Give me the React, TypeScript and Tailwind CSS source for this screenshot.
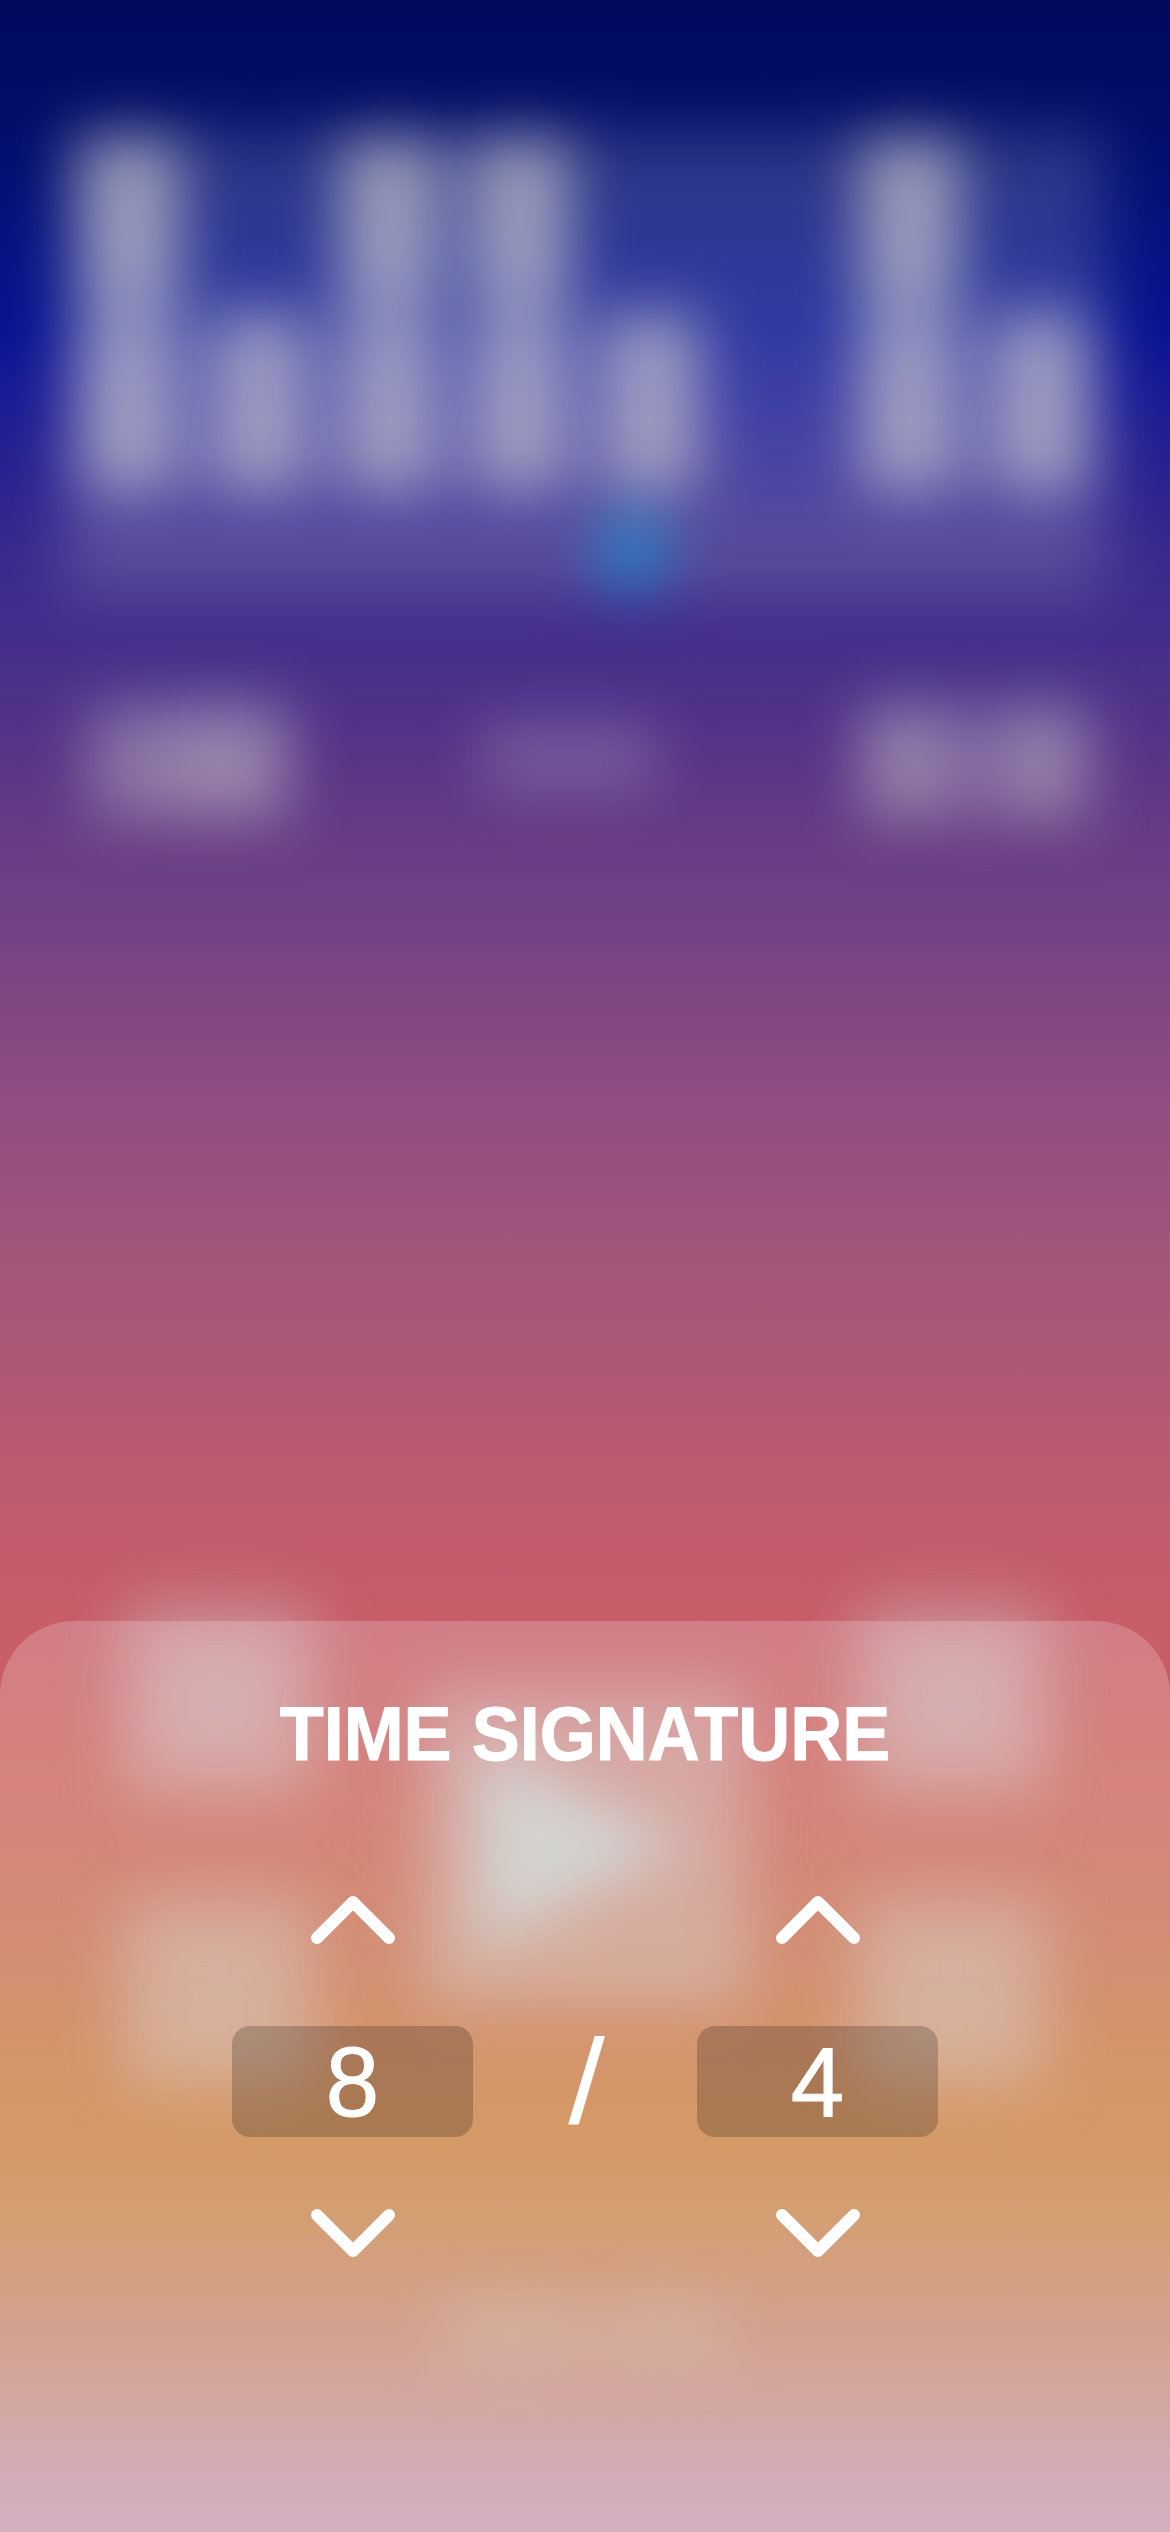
import React from "react";

const beats = [2, 1, 2, 2, 1, 0, 2, 1];

function PadColumn() {
  return (
    <div className="flex w-[196px] flex-col gap-[98px]">
      <div className="flex h-[194px] items-center justify-center rounded-[30px] bg-[rgba(208,212,212,0.41)]">
        <div className="h-[84px] w-[92px] bg-[rgba(210,216,220,0.22)]" />
      </div>
      <div className="flex h-[194px] items-center justify-center rounded-[30px] bg-[rgba(208,202,194,0.41)]">
        <div className="h-[84px] w-[92px] bg-[rgba(206,206,206,0.16)]" />
      </div>
    </div>
  );
}

function Backdrop() {
  return (
    <div className="flex h-[2532px] w-[1170px] flex-col items-center overflow-hidden pt-[130px] blur-[30px]">
      <div className="grid h-[464px] w-[1040px] shrink-0 grid-cols-8 bg-[rgba(255,255,255,0.16)]">
        {beats.map((level, i) => (
          <div key={i} className="flex h-[361px] flex-col items-center justify-end gap-[6px]">
            {level > 1 && <div className="h-[170px] w-[100px] rounded-[12px] bg-[rgba(230,226,218,0.59)]" />}
            {level > 0 && <div className="h-[178px] w-[100px] rounded-[12px] bg-[rgba(230,226,216,0.57)]" />}
          </div>
        ))}
      </div>
      <div className="-mt-[84px] ml-[94px] h-[84px] w-[70px] shrink-0 rounded-full bg-[#2a84c4]" />
      <div className="mt-[104px] flex h-[128px] w-full shrink-0 items-center justify-between pl-[90px] pr-[82px]">
        <div className="flex h-[114px] w-[198px]">
          <div className="h-full w-[76px] bg-[rgba(218,218,214,0.38)]" />
          <div className="h-full w-[122px] bg-[rgba(218,218,214,0.48)]" />
        </div>
        <div className="mb-[8px] mr-[12px] h-[66px] w-[172px] bg-[rgba(225,225,225,0.23)]" />
        <div className="flex h-[114px] w-[226px]">
          <div className="h-full w-[84px] bg-[rgba(218,218,214,0.46)]" />
          <div className="h-full w-[58px] bg-[rgba(218,218,214,0.28)]" />
          <div className="h-full w-[84px] bg-[rgba(218,218,214,0.46)]" />
        </div>
      </div>
      <div className="mt-[776px] flex w-full shrink-0 items-center justify-between px-[120px]">
        <PadColumn />
        <div className="flex h-[322px] w-[330px] items-center rounded-[26px] bg-[rgba(208,208,204,0.42)] pl-[54px]">
          <svg width="214" height="206" viewBox="0 0 214 206">
            <path d="M4 0 L214 103 L4 206 Z" fill="#cad2d0" fillOpacity="0.88" />
          </svg>
        </div>
        <PadColumn />
      </div>
      <div className="mt-[216px] flex shrink-0 gap-[20px]">
        <div className="h-[54px] w-[136px] bg-[rgba(208,190,176,0.42)]" />
        <div className="h-[54px] w-[124px] bg-[rgba(208,190,176,0.39)]" />
      </div>
    </div>
  );
}

function Chevron({ down = false }: { down?: boolean }) {
  return (
    <svg width="86" height="50" viewBox="0 0 86 50" fill="none" stroke="white" strokeWidth="12" strokeLinecap="round" strokeLinejoin="round">
      <path d={down ? "M7 7 L43 43 L79 7" : "M7 43 L43 7 L79 43"} />
    </svg>
  );
}

function Stepper({ value, label }: { value: number; label: string }) {
  return (
    <div className="flex flex-col items-center">
      <button aria-label={`Increase ${label}`} className="h-[50px]">
        <Chevron />
      </button>
      <div className="mt-[81px] flex h-[111px] w-[241px] items-center justify-center rounded-[18px] bg-black/20">
        <span className="scale-y-[1.02] text-[96px] leading-[111px] text-white [-webkit-text-stroke:1px_white]">{value}</span>
      </div>
      <button aria-label={`Decrease ${label}`} className="mt-[71px] h-[50px]">
        <Chevron down />
      </button>
    </div>
  );
}

export default function App() {
  return (
    <div className="relative h-[2532px] w-[1170px] overflow-hidden bg-[linear-gradient(180deg,#010a5c_0px,#020d65_100px,#041073_180px,#071384_260px,#0a1490_330px,#171a94_385px,#232091_446px,#3a2a8b_558px,#442e8b_640px,#503289_715px,#5b3686_772px,#673c84_840px,#6f4084_903px,#7b4485_964px,#7f4682_990px,#854882_1037px,#8f4e81_1094px,#934f80_1137px,#9a517e_1180px,#a2557b_1247px,#aa5778_1324px,#b35974_1400px,#bb5b6f_1470px,#c35c6b_1560px,#c85e67_1640px,#cb6161_1720px,#cb6858_1840px,#c97350_1960px,#cb7f42_2110px,#c88243_2160px,#ca8752_2220px,#c98b73_2330px,#c8938d_2410px,#c898a8_2480px,#c89bb1_2532px)] font-['Liberation_Sans',Arial,sans-serif]">
      <Backdrop />
      <section className="absolute inset-x-0 bottom-0 flex h-[911px] flex-col items-center rounded-t-[74px] bg-white/20">
        <h1 className="mt-[75px] scale-y-[1.05] whitespace-nowrap text-[72px] font-bold leading-[76px] text-white [-webkit-text-stroke:1px_white]">TIME SIGNATURE</h1>
        <div className="mt-[123px] grid grid-cols-[241px_224px_241px]">
          <Stepper value={8} label="beats" />
          <div className="flex items-center justify-center pl-[3px] pt-[9px]">
            <span className="scale-x-[1.1] text-[120px] leading-[120px] text-white">/</span>
          </div>
          <Stepper value={4} label="note value" />
        </div>
      </section>
    </div>
  );
}
